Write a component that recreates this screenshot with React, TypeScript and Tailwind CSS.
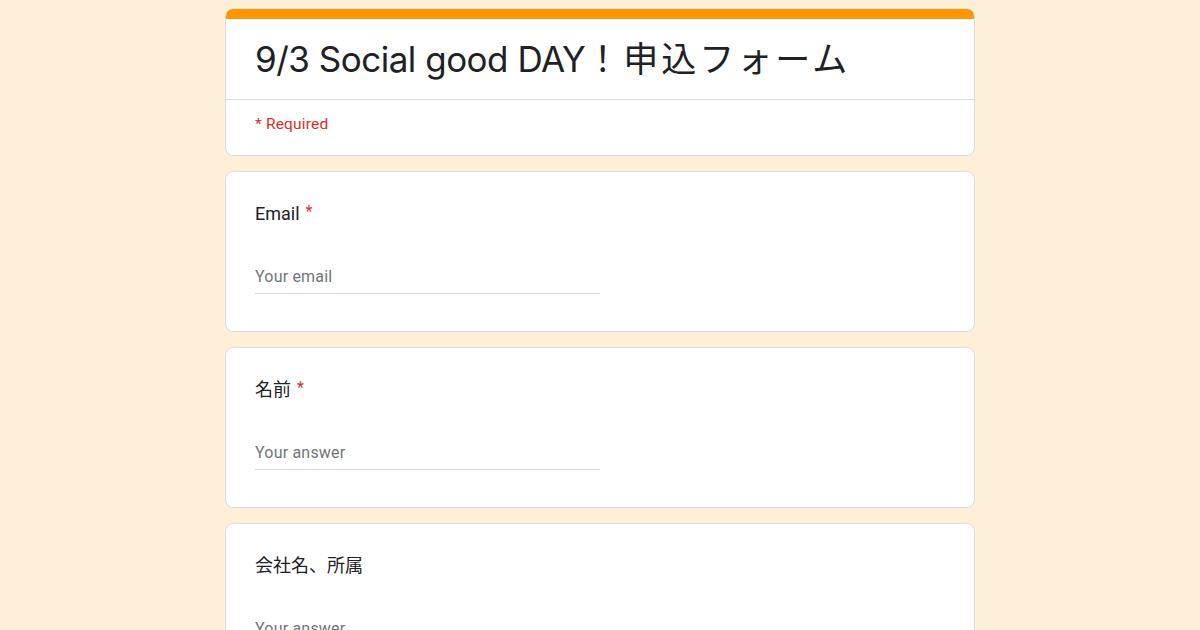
import React from 'react';

const CJK = '"Noto Sans CJK JP"';

function Question({ label, required, placeholder }: { label: string; required?: boolean; placeholder: string }) {
  return (
    <div className="bg-white border border-[#dadce0] rounded-lg px-[29px] pt-[30px] pb-[37px]">
      <div className="text-[18px] leading-[24px] text-[#202124] flex items-start">
        <span>{label}</span>
        {required && <span className="text-[#d93025] text-[16px] leading-[20px] ml-[6px]">*</span>}
      </div>
      <div className="mt-[40px] w-[345px] border-b border-[#dadce0] pb-[5px]">
        <div className="text-[16px] leading-[22px] text-[#70757a] tracking-[0.2px]">{placeholder}</div>
      </div>
    </div>
  );
}

export default function App() {
  return (
    <div
      className="h-[630px] overflow-hidden bg-[#feefd8]"
      style={{ fontFamily: `Roboto, ${CJK}, sans-serif` }}
    >
      <div className="w-[750px] mx-auto pt-[8px] flex flex-col gap-[15px]">
        <div className="bg-white border border-[#dadce0] rounded-lg overflow-hidden">
          <div className="h-[11px] bg-[#ff9800] -mx-px -mt-px"></div>
          <div className="px-[29px] h-[81px] flex items-center border-b border-[#dadce0]">
            <h1
              className="text-[35px] leading-[42px] text-[#202124] tracking-[-0.5px] whitespace-nowrap"
              style={{ fontFamily: `Inter, ${CJK}, sans-serif` }}
            >
              9/3 Social good DAY<span className="tracking-[3px]">！申込フォーム</span>
            </h1>
          </div>
          <div className="px-[29px] pt-[14px] pb-[21px] text-[15.5px] leading-[20px] text-[#d93025] tracking-[0.2px]">* Required</div>
        </div>
        <Question label="Email" required placeholder="Your email" />
        <Question label="名前" required placeholder="Your answer" />
        <Question label="会社名、所属" placeholder="Your answer" />
      </div>
    </div>
  );
}
